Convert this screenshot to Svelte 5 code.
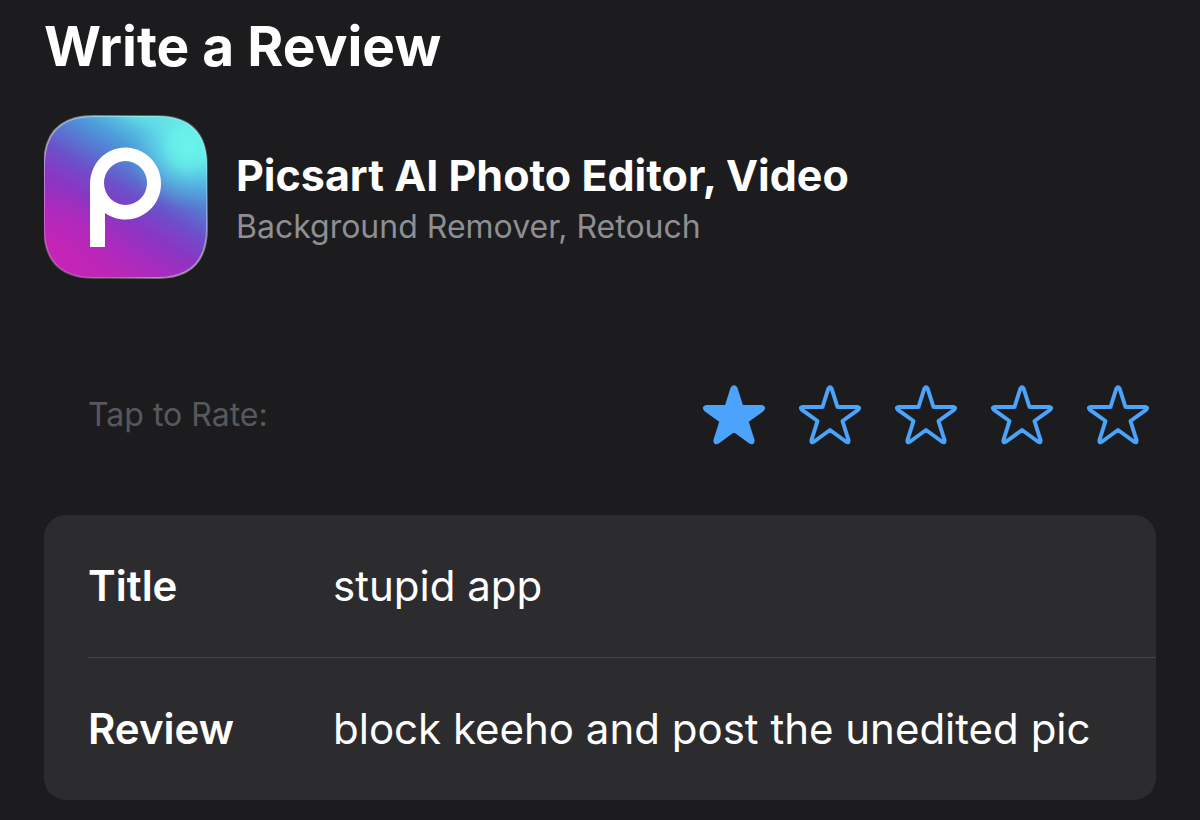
<script lang="ts">
	let rating = $state(1);
	let title = $state('stupid app');
	let review = $state('block keeho and post the unedited pic');

	const stars = [1, 2, 3, 4, 5];
</script>

<main class="page">
	<h1>Write a Review</h1>

	<header class="app">
		<svg class="app-icon" viewBox="0 0 164 164" aria-hidden="true">
			<defs>
				<linearGradient id="base" x1="0.82" y1="0.04" x2="0.26" y2="0.98">
					<stop offset="0" stop-color="#68f5ea" />
					<stop offset="0.08" stop-color="#62e2e7" />
					<stop offset="0.16" stop-color="#55bce1" />
					<stop offset="0.25" stop-color="#4d9bda" />
					<stop offset="0.35" stop-color="#567cd2" />
					<stop offset="0.48" stop-color="#6c50ca" />
					<stop offset="0.62" stop-color="#8a36c4" />
					<stop offset="0.78" stop-color="#a82cbe" />
					<stop offset="0.97" stop-color="#c424b4" />
				</linearGradient>
				<radialGradient id="cyan" cx="0.88" cy="0.2" r="0.38">
					<stop offset="0" stop-color="#69f5ea" />
					<stop offset="0.3" stop-color="#68f0ea" stop-opacity="0.8" />
					<stop offset="1" stop-color="#55b0e0" stop-opacity="0" />
				</radialGradient>
				<radialGradient id="magenta" cx="0.08" cy="0.9" r="0.45">
					<stop offset="0" stop-color="#c624b6" />
					<stop offset="1" stop-color="#b428bc" stop-opacity="0" />
				</radialGradient>
				<linearGradient id="rim" x1="0" y1="0" x2="1" y2="1">
					<stop offset="0" stop-color="#fff" stop-opacity="0.55" />
					<stop offset="0.35" stop-color="#fff" stop-opacity="0.25" />
					<stop offset="0.7" stop-color="#fff" stop-opacity="0.2" />
					<stop offset="1" stop-color="#fff" stop-opacity="0.55" />
				</linearGradient>
				<path
					id="tile"
					d="M50 1H113C146 1 163 18 163 51V113C163 146 146 163 113 163H50C17 163 0 146 0 113V51C0 18 17 1 50 1Z"
				/>
			</defs>
			<use href="#tile" fill="url(#base)" />
			<use href="#tile" fill="url(#magenta)" />
			<use href="#tile" fill="url(#cyan)" />
			<use href="#tile" fill="none" stroke="url(#rim)" stroke-width="2" />
			<path
				fill="#fff"
				fill-rule="evenodd"
				d="M46 132V68A35.5 36 0 1 1 61 98V132ZM60 68A21.5 22 0 1 0 103 68A21.5 22 0 1 0 60 68Z"
			/>
		</svg>
		<div class="app-text">
			<h2>Picsart AI Photo Editor, Video</h2>
			<p>Background Remover, Retouch</p>
		</div>
	</header>

	<form>
		<fieldset class="rating">
			<legend>Tap to Rate:</legend>
			<div class="stars">
				{#each stars as n}
					<label class="star" class:filled={n <= rating}>
						<input type="radio" name="rating" value={n} bind:group={rating} aria-label="{n} stars" />
						<svg viewBox="0 0 64 60" aria-hidden="true">
							<path
								d="M30.4 3.500Q32 1 33.6 3.500L39.500 22H59.500Q62.500 22.500 60 24.800L44.500 36L50.500 55Q51 58 48.500 57L32 45L15.500 57Q13 58 13.500 55L19.500 36L4 24.800Q1.500 22.500 4.500 22H24.500Z"
							/>
						</svg>
					</label>
				{/each}
			</div>
		</fieldset>

		<div class="card">
			<div class="row">
				<label for="title">Title</label>
				<input id="title" type="text" bind:value={title} />
			</div>
			<div class="row">
				<label for="review">Review</label>
				<input id="review" type="text" bind:value={review} />
			</div>
		</div>
	</form>
</main>

<style>
	:global(body) {
		background: #1c1c1e;
	}

	.page {
		padding: 12px 44px 20px;
		font-family: Inter, 'Liberation Sans', sans-serif;
		color: #fff;
	}

	h1 {
		margin: 0;
		font-size: 55px;
		line-height: 68px;
		font-weight: 700;
	}

	.app {
		display: flex;
		align-items: center;
		gap: 28px;
		margin-top: 35px;
	}

	.app-icon {
		flex: none;
		width: 164px;
		height: 164px;
	}

	.app-text {
		padding-top: 4px;
	}

	h2 {
		margin: 0;
		font-size: 43px;
		line-height: 56px;
		font-weight: 700;
	}

	.app-text p {
		margin: 0;
		font-size: 32px;
		line-height: 48px;
		color: #8e8e93;
	}

	.rating {
		display: flex;
		align-items: center;
		justify-content: space-between;
		margin: 106px 0 0;
		padding: 0 6px 0 44px;
		border: 0;
	}

	.rating legend {
		float: left;
		padding: 0;
		font-size: 32px;
		line-height: 60px;
		color: #58585c;
	}

	.stars {
		display: flex;
		gap: 32px;
	}

	.star {
		position: relative;
		cursor: pointer;
	}

	.star input {
		position: absolute;
		inset: 0;
		margin: 0;
		opacity: 0;
	}

	.star svg {
		display: block;
		width: 64px;
		height: 60px;
		fill: none;
		stroke: #4ba3fb;
		stroke-width: 4;
		stroke-linejoin: round;
	}

	.star.filled svg {
		fill: #4ba3fb;
	}

	.card {
		margin-top: 70px;
		border-radius: 22px;
		background: #2c2c2e;
	}

	.row {
		display: flex;
		align-items: center;
		height: 142px;
		margin-left: 44px;
	}

	.row + .row {
		border-top: 1px solid #464649;
	}

	.row label {
		flex: none;
		width: 245px;
		font-size: 42px;
		line-height: 52px;
		font-weight: 600;
	}

	.row input {
		flex: 1;
		min-width: 0;
		padding: 0 24px 0 0;
		border: 0;
		outline: none;
		background: none;
		font: inherit;
		font-size: 42px;
		line-height: 52px;
		color: inherit;
	}
</style>
